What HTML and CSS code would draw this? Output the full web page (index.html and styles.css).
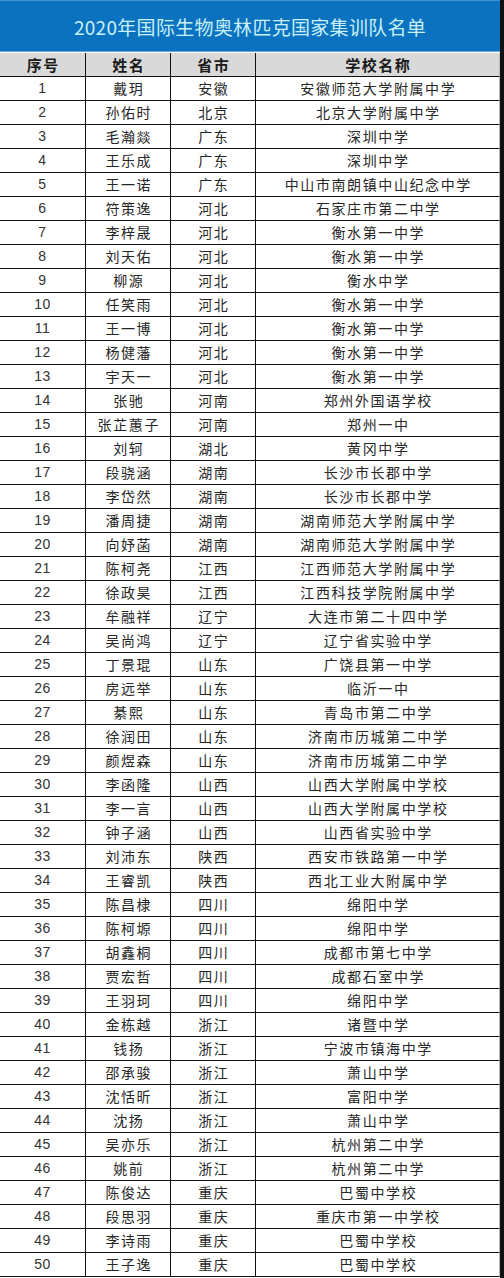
FILE: index.html
```html
<!DOCTYPE html>
<html lang="zh-CN">
<head>
<meta charset="utf-8">
<title>2020年国际生物奥林匹克国家集训队名单</title>
<link rel="stylesheet" href="styles.css">
</head>
<body>
<div class="page">
  <div class="title">2020年国际生物奥林匹克国家集训队名单</div>
  <div class="row head"><div>序号</div><div>姓名</div><div>省市</div><div>学校名称</div></div>
  <div id="rows"></div>
</div>
<script src="app.js"></script>
</body>
</html>
```
FILE: app.js
```js
const data = [
["戴玥","安徽","安徽师范大学附属中学"],
["孙佑时","北京","北京大学附属中学"],
["毛瀚燚","广东","深圳中学"],
["王乐成","广东","深圳中学"],
["王一诺","广东","中山市南朗镇中山纪念中学"],
["符策逸","河北","石家庄市第二中学"],
["李梓晟","河北","衡水第一中学"],
["刘天佑","河北","衡水第一中学"],
["柳源","河北","衡水中学"],
["任笑雨","河北","衡水第一中学"],
["王一博","河北","衡水第一中学"],
["杨健藩","河北","衡水第一中学"],
["宇天一","河北","衡水第一中学"],
["张驰","河南","郑州外国语学校"],
["张芷蕙子","河南","郑州一中"],
["刘轲","湖北","黄冈中学"],
["段骁涵","湖南","长沙市长郡中学"],
["李岱然","湖南","长沙市长郡中学"],
["潘周捷","湖南","湖南师范大学附属中学"],
["向妤菡","湖南","湖南师范大学附属中学"],
["陈柯尧","江西","江西师范大学附属中学"],
["徐政昊","江西","江西科技学院附属中学"],
["牟融祥","辽宁","大连市第二十四中学"],
["吴尚鸿","辽宁","辽宁省实验中学"],
["丁景琨","山东","广饶县第一中学"],
["房远举","山东","临沂一中"],
["綦熙","山东","青岛市第二中学"],
["徐润田","山东","济南市历城第二中学"],
["颜煜森","山东","济南市历城第二中学"],
["李函隆","山西","山西大学附属中学校"],
["李一言","山西","山西大学附属中学校"],
["钟子涵","山西","山西省实验中学"],
["刘沛东","陕西","西安市铁路第一中学"],
["王睿凯","陕西","西北工业大附属中学"],
["陈昌棣","四川","绵阳中学"],
["陈柯塬","四川","绵阳中学"],
["胡鑫桐","四川","成都市第七中学"],
["贾宏哲","四川","成都石室中学"],
["王羽珂","四川","绵阳中学"],
["金栋越","浙江","诸暨中学"],
["钱扬","浙江","宁波市镇海中学"],
["邵承骏","浙江","萧山中学"],
["沈恬昕","浙江","富阳中学"],
["沈扬","浙江","萧山中学"],
["吴亦乐","浙江","杭州第二中学"],
["姚前","浙江","杭州第二中学"],
["陈俊达","重庆","巴蜀中学校"],
["段思羽","重庆","重庆市第一中学校"],
["李诗雨","重庆","巴蜀中学校"],
["王子逸","重庆","巴蜀中学校"]
];
const box = document.getElementById("rows");
data.forEach((r, i) => {
  const row = document.createElement("div");
  row.className = "row";
  const cells = [String(i + 1), r[0], r[1], r[2]];
  cells.forEach((t, j) => {
    const c = document.createElement("div");
    c.textContent = t;
    if (j === 0) c.className = "num";
    row.appendChild(c);
  });
  box.appendChild(row);
});
```
FILE: styles.css
```css
html, body {
  margin: 0;
  padding: 0;
  background: #ffffff;
}
body {
  width: 504px;
  font-family: "Liberation Sans", "Noto Sans CJK SC", sans-serif;
  color: #222;
}
.page {
  width: 500px;
  border-right: 4px solid #111;
  min-height: 1278px;
  box-sizing: content-box;
}
.title {
  height: 52px;
  box-sizing: border-box;
  border-top: 1px solid #3f95d6;
  background: #0b72c0;
  color: #c8f0f8;
  font-family: "Noto Sans CJK SC", sans-serif;
  font-size: 19px;
  line-height: 51px;
  text-align: center;
  border-bottom: 1px solid #6aa9da;
  letter-spacing: 0.3px;
}
.row {
  display: grid;
  grid-template-columns: 85px 85px 85px 1fr;
  height: 24px;
  box-sizing: border-box;
  border-bottom: 1px solid #111;
  border-right: 1px solid #bbb;
}
.row > div {
  text-align: center;
  font-family: "Noto Sans CJK SC", sans-serif;
  font-size: 14px;
  line-height: 23px;
  letter-spacing: 1.6px;
  padding-left: 1.6px;
  color: #262626;
}
.row > div + div {
  border-left: 1px solid #111;
}
.row > .num {
  font-family: "Liberation Sans", sans-serif;
  font-size: 14px;
  letter-spacing: 0.5px;
  padding-left: 0;
  color: #333;
}
.row.head {
  margin-top: 1px;
  background: #d9d9d9;
}
.row.head > div {
  font-weight: bold;
  font-size: 15px;
  letter-spacing: 1.5px;
  color: #1a1a1a;
}
```
